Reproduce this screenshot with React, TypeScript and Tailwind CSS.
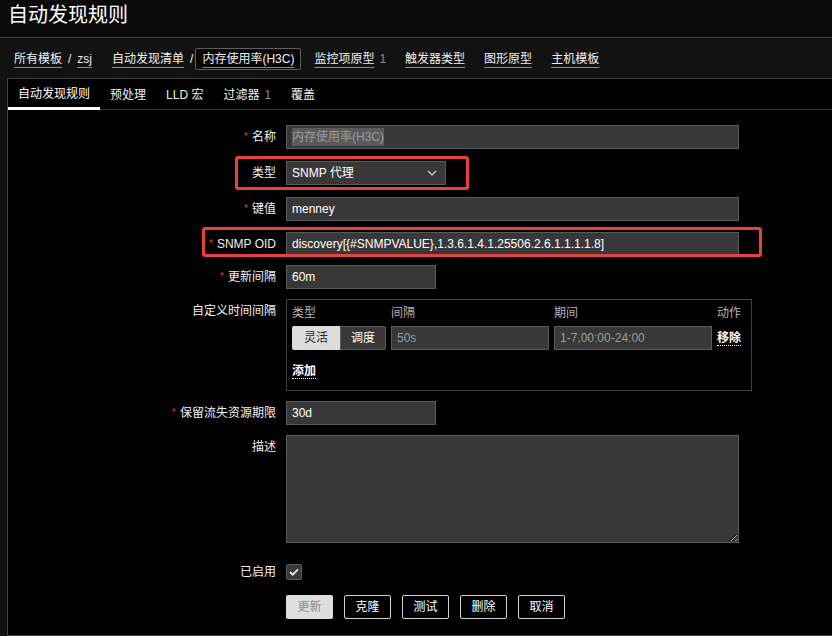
import React from 'react';

const crumbs = ['监控项原型', '触发器类型', '图形原型', '主机模板'];
const tabs = ['自动发现规则', '预处理', 'LLD 宏', '过滤器', '覆盖'];

function Label({ text, req }: { text: string; req?: boolean }) {
    return (
        <div className="w-[268px] shrink-0 text-right leading-[24px] text-[#f0f0f0]">
            {req && <span className="text-[#e0392f] text-[10px] align-top mr-[4px]">*</span>}
            {text}
        </div>
    );
}

const inputCls = 'h-[24px] bg-[#383838] border border-[#5a5a5a] px-[5px] flex items-center text-[12px]';

export default function App() {
    return (
        <div className="w-[832px] h-[636px] overflow-hidden flex flex-col bg-[#121212] text-[12px] text-[#f0f0f0] font-['Liberation_Sans','Noto_Sans_CJK_SC',sans-serif]">
            {/* Header */}
            <div className="h-[38px] bg-[#0a0a0a] border-b border-[#414141] flex items-start pt-[4px] px-[8px] shrink-0">
                <h1 className="text-[20px] leading-[22px] text-white">自动发现规则</h1>
            </div>

            {/* Breadcrumbs */}
            <div className="h-[40px] flex items-center pl-[14px] pt-[2px] shrink-0">
                <a className="underline decoration-[#8a8a8a] underline-offset-[4px]">所有模板</a>
                <span className="mx-[6px]">/</span>
                <a className="underline decoration-[#8a8a8a] underline-offset-[4px]">zsj</a>
                <a className="ml-[20px] underline decoration-[#8a8a8a] underline-offset-[4px]">自动发现清单</a>
                <span className="ml-[6px] mr-[2px]">/</span>
                <span className="h-[22px] px-[6px] border border-[#5e5e5e] rounded-[2px] bg-[#050505] flex items-center">
                    <span className="underline decoration-[#8a8a8a] underline-offset-[4px]">内存使用率(H3C)</span>
                </span>
                {crumbs.map((c, i) => (
                    <span key={c} className={i === 0 ? 'ml-[13px]' : 'ml-[19px]'}>
                        <a className="underline decoration-[#8a8a8a] underline-offset-[4px]">{c}</a>
                        {i === 0 && <span className="ml-[5px] text-[#8c8c8c]">1</span>}
                    </span>
                ))}
            </div>

            {/* Content panel */}
            <div className="flex-1 ml-[7px] bg-black border-l border-t border-b border-[#414141]">
                <ul className="h-[31px] flex border-b border-[#3a3a3a]">
                    {tabs.map((t, i) => (
                        <li
                            key={t}
                            className={
                                i === 0
                                    ? 'h-[31px] px-[10px] pt-[1px] flex items-center border-b-[3px] border-white text-white'
                                    : 'h-[30px] px-[10px] pt-[1px] flex items-center text-[#f0f0f0]'
                            }
                        >
                            {t}
                            {t === '过滤器' && <span className="ml-[5px] text-[#8c8c8c]">1</span>}
                        </li>
                    ))}
                </ul>

                <div className="pt-[15px] flex flex-col">
                    {/* 名称 */}
                    <div className="flex gap-[10px]">
                        <Label text="名称" req />
                        <div className={inputCls + ' w-[453px]'}>
                            <span className="bg-[#5a5a5a] text-[#9c9c9c] leading-[18px]">内存使用率(H3C)</span>
                        </div>
                    </div>

                    {/* 类型 */}
                    <div className="relative flex gap-[10px] mt-[12px]">
                        <Label text="类型" />
                        <div className={inputCls + ' w-[160px] justify-between'}>
                            <span className="text-white">SNMP 代理</span>
                            <svg width="10" height="6" viewBox="0 0 10 6" className="mr-[3px]">
                                <path d="M1 1l4 4 4-4" stroke="#dcdcdc" strokeWidth="1.2" fill="none" />
                            </svg>
                        </div>
                        <div className="absolute left-[227px] top-[-5px] w-[234px] h-[34px] border-[3px] border-[#e8423c] rounded-[3px]" />
                    </div>

                    {/* 键值 */}
                    <div className="flex gap-[10px] mt-[12px]">
                        <Label text="键值" req />
                        <div className={inputCls + ' w-[453px] text-white'}>menney</div>
                    </div>

                    {/* SNMP OID */}
                    <div className="relative flex gap-[10px] mt-[11px]">
                        <Label text="SNMP OID" req />
                        <div className={inputCls + ' w-[453px] text-white'}>discovery[{'{'}#SNMPVALUE{'}'},1.3.6.1.4.1.25506.2.6.1.1.1.1.8]</div>
                        <div className="absolute left-[194px] top-[-5px] w-[560px] h-[30px] border-[3px] border-[#e8423c] rounded-[3px]" />
                    </div>

                    {/* 更新间隔 */}
                    <div className="flex gap-[10px] mt-[9px]">
                        <Label text="更新间隔" req />
                        <div className={inputCls + ' w-[150px] text-white'}>60m</div>
                    </div>

                    {/* 自定义时间间隔 */}
                    <div className="flex gap-[10px] mt-[10px]">
                        <Label text="自定义时间间隔" />
                        <div className="w-[466px] h-[92px] border border-[#414141] pl-[5px] pt-[4px]">
                            <div className="grid grid-cols-[94px_158px_158px_auto] gap-x-[5px] text-[#b4b4b4] leading-[18px]">
                                <span>类型</span>
                                <span>间隔</span>
                                <span>期间</span>
                                <span>动作</span>
                            </div>
                            <div className="grid grid-cols-[94px_158px_158px_auto] gap-x-[5px] mt-[4px]">
                                <div className="flex h-[24px]">
                                    <span className="w-[48px] bg-[#dcdcdc] text-[#2a2a2a] rounded-l-[2px] flex items-center justify-center">灵活</span>
                                    <span className="w-[46px] bg-[#383838] border border-[#5a5a5a] rounded-r-[2px] flex items-center justify-center text-white">调度</span>
                                </div>
                                <div className={inputCls + ' text-[#9c9c9c]'}>50s</div>
                                <div className={inputCls + ' text-[#9c9c9c]'}>1-7,00:00-24:00</div>
                                <div className="flex items-center">
                                    <span className="font-bold text-white leading-[14px] border-b border-dotted border-white">移除</span>
                                </div>
                            </div>
                            <div className="mt-[12px]">
                                <span className="font-bold text-white leading-[14px] border-b border-dotted border-white">添加</span>
                            </div>
                        </div>
                    </div>

                    {/* 保留流失资源期限 */}
                    <div className="flex gap-[10px] mt-[10px]">
                        <Label text="保留流失资源期限" req />
                        <div className={inputCls + ' w-[150px] text-white'}>30d</div>
                    </div>

                    {/* 描述 */}
                    <div className="flex gap-[10px] mt-[10px]">
                        <Label text="描述" />
                        <textarea className="w-[453px] h-[108px] bg-[#383838] border border-[#5a5a5a] outline-none" />
                    </div>

                    {/* 已启用 */}
                    <div className="flex items-center gap-[10px] mt-[17px]">
                        <Label text="已启用" />
                        <div className="w-[16px] h-[16px] bg-[#383838] border border-[#5a5a5a] rounded-[2px] flex items-center justify-center">
                            <svg width="10" height="8" viewBox="0 0 10 8">
                                <path d="M1 4l2.7 2.7L9 1.3" stroke="#e6e6e6" strokeWidth="1.8" fill="none" />
                            </svg>
                        </div>
                    </div>

                    {/* Buttons */}
                    <div className="flex gap-[11px] mt-[11px] ml-[278px]">
                        <button className="w-[47px] h-[24px] bg-[#dedede] text-[#8a8a8a] rounded-[2px]">更新</button>
                        {['克隆', '测试', '删除', '取消'].map((b) => (
                            <button key={b} className="w-[47px] h-[24px] border border-[#d0d0d0] text-white rounded-[2px]">
                                {b}
                            </button>
                        ))}
                    </div>
                </div>
            </div>
        </div>
    );
}
